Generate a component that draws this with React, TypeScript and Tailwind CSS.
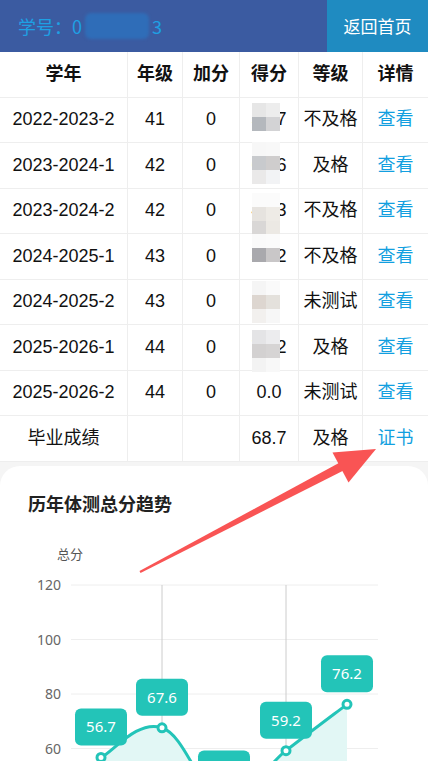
import React from 'react';

type Row = {
  term: string;
  grade: string;
  bonus: string;
  score: string;
  level: string;
  link: string;
  mosaic?: { top: number; cells: string[] };
};

const rows: Row[] = [
  { term: '2022-2023-2', grade: '41', bonus: '0', score: '56.7', level: '不及格', link: '查看', mosaic: { top: 5, cells: ['#e6e6e6', '#ededed', '#b4b8bd', '#d3d3d5'] } },
  { term: '2023-2024-1', grade: '42', bonus: '0', score: '67.6', level: '及格', link: '查看', mosaic: { top: -1, cells: ['#f7f7f7', '#f8f8f8', '#c8cacd', '#cfcdcd', '#eae9e9', '#f2f3f5'] } },
  { term: '2023-2024-2', grade: '42', bonus: '0', score: '41.3', level: '不及格', link: '查看', mosaic: { top: 4, cells: ['#fbfbfb', '#fbfbfb', '#e6e3df', '#eeebe6', '#d9d7d6', '#ece9e4'] } },
  { term: '2024-2025-1', grade: '43', bonus: '0', score: '59.2', level: '不及格', link: '查看', mosaic: { top: 0, cells: ['#fafafa', '#fbfbfb', '#a9a9ad', '#c9c7c8'] } },
  { term: '2024-2025-2', grade: '43', bonus: '0', score: '', level: '未测试', link: '查看', mosaic: { top: 1, cells: ['#f5f5f5', '#fafafa', '#ddd6d0', '#e4e1dc', '#f2f0ee', '#f7f7f7'] } },
  { term: '2025-2026-1', grade: '44', bonus: '0', score: '76.2', level: '及格', link: '查看', mosaic: { top: 5, cells: ['#e4e4e6', '#ececee', '#d3d1d1', '#d6d4d4', '#f3f3f3', '#f8f8f8'] } },
  { term: '2025-2026-2', grade: '44', bonus: '0', score: '0.0', level: '未测试', link: '查看' },
  { term: '毕业成绩', grade: '', bonus: '', score: '68.7', level: '及格', link: '证书' },
];

const Mosaic: React.FC<{ top: number; cells: string[] }> = ({ top, cells }) => (
  <div className="absolute left-[12px] w-[28px] grid grid-cols-2" style={{ top }}>
    {cells.map((c, i) => (
      <div key={i} className="h-[14px]" style={{ backgroundColor: c }} />
    ))}
  </div>
);

// chart geometry
const yOf = (v: number) => 54 + (120 - v) * 2.725;
const pts = [
  { x: 101, v: 56.7 },
  { x: 162, v: 67.6 },
  { x: 224, v: 41.3 },
  { x: 286, v: 59.2 },
  { x: 347, v: 76.2 },
];

const buildPath = () => {
  const p = pts.map((d) => ({ x: d.x, y: yOf(d.v) }));
  const k = 0.2;
  let d = `M${p[0].x},${p[0].y}`;
  for (let i = 0; i < p.length - 1; i++) {
    const p0 = p[i - 1] || p[i];
    const p1 = p[i];
    const p2 = p[i + 1];
    const p3 = p[i + 2] || p2;
    const c1x = p1.x + (p2.x - p0.x) * k;
    const c1y = p1.y + (p2.y - p0.y) * k;
    const c2x = p2.x - (p3.x - p1.x) * k;
    const c2y = p2.y - (p3.y - p1.y) * k;
    d += ` C${c1x},${c1y} ${c2x},${c2y} ${p2.x},${p2.y}`;
  }
  return d;
};

const TEAL = '#23c4b8';

const TrendChart: React.FC = () => {
  const line = buildPath();
  const area = `${line} L347,300 L101,300 Z`;
  return (
    <svg width="428" height="231" viewBox="0 0 428 231" className="block">
      <text x="70" y="28" textAnchor="middle" fontSize="13" fill="#555" fontFamily="'Noto Sans CJK SC', sans-serif">
        总分
      </text>
      {[120, 100, 80, 60].map((v) => (
        <g key={v}>
          <line x1="71" x2="378" y1={yOf(v)} y2={yOf(v)} stroke="#eeeeee" strokeWidth="1" />
          <text x="61" y={yOf(v) + 5} textAnchor="end" fontSize="14" fill="#666" fontFamily="'Noto Sans', sans-serif">
            {v}
          </text>
        </g>
      ))}
      <line x1="162" x2="162" y1={yOf(120)} y2="231" stroke="#cccccc" strokeWidth="1" />
      <line x1="286" x2="286" y1={yOf(120)} y2="231" stroke="#cccccc" strokeWidth="1" />
      <path d={area} fill="#e2f7f5" />
      <path d={line} fill="none" stroke={TEAL} strokeWidth="3" />
      {pts.map((d) => (
        <circle key={d.x} cx={d.x} cy={yOf(d.v)} r="4" fill="#ffffff" stroke={TEAL} strokeWidth="3" />
      ))}
      {pts.map((d) => {
        const bottom = yOf(d.v) - 12;
        return (
          <g key={`l${d.x}`}>
            <rect x={d.x - 26} y={bottom - 37} width="52" height="37" rx="6" fill={TEAL} />
            {bottom < 231 && (
              <text x={d.x} y={bottom - 13} textAnchor="middle" fontSize="15" fill="#ffffff" fontFamily="'Noto Sans', sans-serif">
                {d.v.toFixed(1)}
              </text>
            )}
          </g>
        );
      })}
    </svg>
  );
};

const Arrow: React.FC = () => (
  <svg className="absolute left-0 top-0 pointer-events-none" width="428" height="761" viewBox="0 0 428 761">
    <polygon points="139.5,571 140.5,573 347.5,468.5 343.5,460.5" fill="#f95454" />
    <polygon points="376,449 332.5,452.5 348.5,482.5" fill="#f95454" />
  </svg>
);

const App: React.FC = () => {
  const cellBase = 'relative flex items-center justify-center border-b border-[#eeeeee] h-[45.5px]';
  return (
    <div className="relative w-[428px] h-[761px] overflow-hidden bg-[#f5f5f5] font-['Liberation_Sans','Noto_Sans_CJK_SC',sans-serif]">
      {/* Header */}
      <div className="flex h-[52px]">
        <div className="flex-1 bg-[#3b5ba1] flex items-center pl-[18px] text-[18px] text-[#1ea0e4] font-['Noto_Sans_CJK_SC',sans-serif]">
          <span>学号：0</span>
          <span className="inline-block w-[64px] h-[26px] mx-[3px] rounded-[6px] bg-[#2f6db8] blur-[1.5px]" />
          <span>3</span>
        </div>
        <div className="w-[101px] bg-[#1f8bc1] flex items-center justify-center text-white text-[17px] font-['Noto_Sans_CJK_SC',sans-serif]">
          返回首页
        </div>
      </div>

      {/* Table */}
      <div className="grid grid-cols-[128px_55px_57px_59px_64px_65px] bg-white text-[18px] text-[#111]">
        {['学年', '年级', '加分', '得分', '等级', '详情'].map((h, i) => (
          <div key={h} className={`${cellBase} font-bold ${i < 5 ? 'border-r' : ''}`}>
            {h}
          </div>
        ))}
        {rows.map((r) => (
          <React.Fragment key={r.term}>
            <div className={`${cellBase} border-r`}>{r.term}</div>
            <div className={`${cellBase} border-r`}>{r.grade}</div>
            <div className={`${cellBase} border-r`}>{r.bonus}</div>
            <div className={`${cellBase} border-r`}>
              {r.score}
              {r.mosaic && <Mosaic top={r.mosaic.top} cells={r.mosaic.cells} />}
            </div>
            <div className={`${cellBase} border-r`}>{r.level}</div>
            <div className={`${cellBase} text-[#139fe0]`}>{r.link}</div>
          </React.Fragment>
        ))}
      </div>

      {/* Chart card */}
      <div className="pt-[4px]">
        <div className="bg-white rounded-t-[20px] pt-[25px]">
          <div className="px-[28px] text-[18px] leading-[24px] font-bold text-[#222] font-['Noto_Sans_CJK_SC',sans-serif]">
            历年体测总分趋势
          </div>
          <div className="mt-[16px]">
            <TrendChart />
          </div>
        </div>
      </div>

      <Arrow />
    </div>
  );
};

export default App;
